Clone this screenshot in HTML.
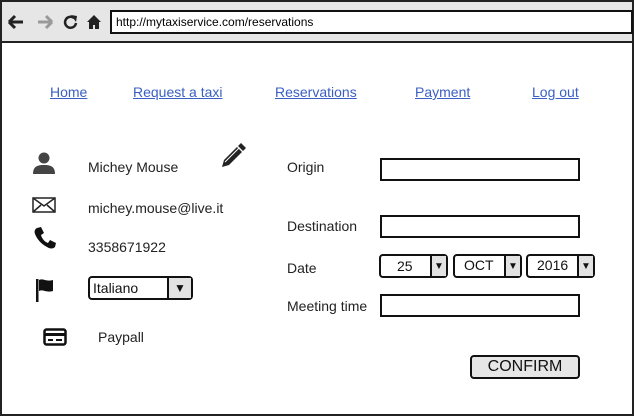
<!DOCTYPE html>
<html><head><style>
body{margin:0;width:634px;height:418px;background:#fff;font-family:"Liberation Sans",Arial,sans-serif;position:relative;overflow:hidden}
.a{position:absolute}
.frame{left:0;top:0;width:630px;height:412px;border:2px solid #222}
.bar{left:2px;top:2px;width:630px;height:39px;background:#e6e6e6;border-bottom:2px solid #222}
.url{left:110px;top:10px;width:515px;height:20px;border:2px solid #111;background:#fff;font-size:12px;line-height:20px;padding-left:4px;box-sizing:content-box}
.nav{top:84px;font-size:14px;color:#3a5fc4;text-decoration:underline}
.t{font-size:14px;color:#222}
.box{border:2px solid #111;background:#fff;box-sizing:border-box}
.dd{border:2px solid #111;border-radius:4px;background:#fff;box-sizing:border-box;font-size:14px;color:#111}
.dd .arr{position:absolute;right:0;top:0;bottom:0;background:#e2e2e2;border-left:2px solid #111;display:flex;align-items:center;justify-content:center;font-size:10px}
</style></head><body>
<div class="a frame"></div>
<div class="a bar"></div>
<svg class="a" style="left:6px;top:12px" width="100" height="20" viewBox="0 0 100 20">
<path d="M3 10h14M3 10l6-6M3 10l6 6" stroke="#222" stroke-width="3" fill="none"/>
<path d="M32 10h14M46 10l-6-6M46 10l-6 6" stroke="#999" stroke-width="3" fill="none"/>
<path d="M68 6a5.5 5.5 0 1 0 2 5" stroke="#222" stroke-width="2.5" fill="none"/><path d="M65 3l6 1-1 6z" fill="#222"/>
<path d="M81 10l7-7 7 7h-2v7h-4v-4h-2v4h-4v-7z" fill="#222"/>
</svg>
<div class="a url">http://mytaxiservice.com/reservations</div>
<div class="a nav" style="left:50px">Home</div>
<div class="a nav" style="left:133px">Request a taxi</div>
<div class="a nav" style="left:275px">Reservations</div>
<div class="a nav" style="left:415px">Payment</div>
<div class="a nav" style="left:532px">Log out</div>

<svg class="a" style="left:32px;top:152px" width="24" height="22" viewBox="0 0 24 22"><circle cx="12" cy="6" r="5.5" fill="#444"/><path d="M1 22c0-8 5-9 11-9s11 1 11 9z" fill="#444"/></svg>
<svg class="a" style="left:220px;top:143px" width="26" height="26" viewBox="0 0 26 26"><path d="M2 24l2-7 13-13 5 5-13 13z" fill="#222"/><path d="M18 3l3-3 5 5-3 3z" fill="#222"/><path d="M5 19l14-14" stroke="#fff" stroke-width="1"/></svg>
<div class="a t" style="left:88px;top:159px">Michey Mouse</div>
<svg class="a" style="left:32px;top:197px" width="24" height="16" viewBox="0 0 24 16"><rect x="1" y="1" width="22" height="14" fill="none" stroke="#222" stroke-width="1.5"/><path d="M1 1l11 8 11-8M1 15l8-7M23 15l-8-7" fill="none" stroke="#222" stroke-width="1.5"/></svg>
<div class="a t" style="left:88px;top:200px">michey.mouse@live.it</div>
<svg class="a" style="left:34px;top:227px" width="22" height="22" viewBox="0 0 22 22"><path d="M3 1l4-1 3 6-3 2c1 4 4 7 7 8l2-3 6 3-1 4c-2 2-5 2-8 0C7 17 3 12 1 7 0 4 1 2 3 1z" fill="#111"/></svg>
<div class="a t" style="left:88px;top:239px">3358671922</div>
<svg class="a" style="left:35px;top:278px" width="22" height="24" viewBox="0 0 22 24"><rect x="1" y="1" width="2.5" height="23" fill="#111"/><path d="M4 2c4-2 7 2 14 0v11c-7 2-10-2-14 0z" fill="#111"/></svg>
<div class="a dd" style="left:88px;top:276px;width:105px;height:24px"><span style="position:absolute;left:3px;top:2px">Italiano</span><div class="arr" style="width:22px;font-size:12px">▼</div></div>
<svg class="a" style="left:43px;top:328px" width="24" height="18" viewBox="0 0 24 18"><rect x="1.5" y="1.5" width="21" height="15" rx="2" fill="none" stroke="#111" stroke-width="2.5"/><rect x="1" y="5" width="22" height="3" fill="#111"/><rect x="5" y="11" width="5" height="2" fill="#111"/><rect x="13" y="11" width="6" height="2" fill="#111"/></svg>
<div class="a t" style="left:98px;top:329px">Paypall</div>

<div class="a t" style="left:287px;top:159px">Origin</div>
<div class="a box" style="left:380px;top:158px;width:200px;height:23px"></div>
<div class="a t" style="left:287px;top:218px">Destination</div>
<div class="a box" style="left:380px;top:215px;width:200px;height:23px"></div>
<div class="a t" style="left:287px;top:260px">Date</div>
<div class="a dd" style="left:379px;top:254px;width:69px;height:24px"><span style="position:absolute;left:16px;top:2px">25</span><div class="arr" style="width:14px">▼</div></div>
<div class="a dd" style="left:453px;top:254px;width:69px;height:24px"><span style="position:absolute;left:9px;top:1px">OCT</span><div class="arr" style="width:14px">▼</div></div>
<div class="a dd" style="left:526px;top:254px;width:69px;height:24px"><span style="position:absolute;left:9px;top:1px">2016</span><div class="arr" style="width:14px">▼</div></div>
<div class="a t" style="left:287px;top:298px">Meeting time</div>
<div class="a box" style="left:380px;top:294px;width:200px;height:23px"></div>
<div class="a dd" style="left:470px;top:355px;width:110px;height:24px;background:#e6e6e6;font-size:16px;text-align:center;line-height:20px">CONFIRM</div>
</body></html>
